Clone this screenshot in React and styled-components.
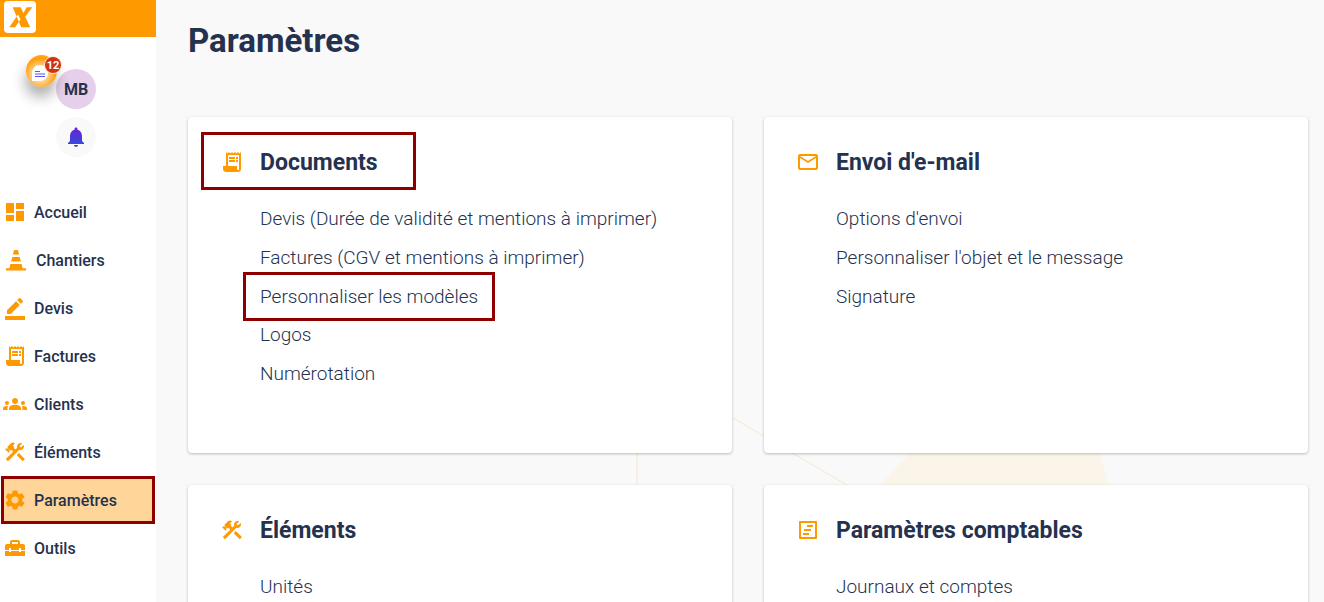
import React from 'react'
import styled, { createGlobalStyle } from 'styled-components'
import {
  MdDashboard,
  MdBorderColor,
  MdReceiptLong,
  MdGroups,
  MdConstruction,
  MdSettings,
  MdHomeRepairService,
  MdMailOutline,
} from 'react-icons/md'

const GlobalStyle = createGlobalStyle`
  html, body {
    margin: 0;
    height: 100%;
    overflow: hidden;
    background: #f9f9f9;
    font-family: Roboto, "Liberation Sans", sans-serif;
    color: #25324f;
  }
`

const Layout = styled.div`
  display: flex;
  height: 602px;
  overflow: hidden;
`

const Sidebar = styled.aside`
  width: 156px;
  flex: none;
  background: #fff;
`

const LogoBar = styled.div`
  height: 37px;
  background: #ff9900;
  padding: 1px 0 0 4px;
  box-sizing: border-box;
`

const Logo = styled.div`
  width: 32px;
  height: 32px;
  background: #fff;
  border-radius: 4px;
  display: flex;
`

const Profile = styled.div`
  display: flex;
  flex-direction: column;
  align-items: center;
  gap: 8px;
  padding: 32px 4px 0 0;
  height: 151px;
  box-sizing: border-box;
`

const Avatar = styled.div`
  position: relative;
  width: 40px;
  height: 40px;
  border-radius: 50%;
  background: #e6cfea;
  display: flex;
  align-items: center;
  justify-content: center;
  font-size: 16px;
  font-weight: 700;
`

const ChatBubble = styled.div`
  position: absolute;
  left: -30px;
  top: -14px;
  width: 31px;
  height: 32px;
  border-radius: 50%;
  background: radial-gradient(circle at 45% 60%, #ffd28a 0 30%, #ff9d0a 62%, #ffc46b 100%);
  box-shadow: -1px 10px 14px rgba(0, 0, 0, 0.32);
  display: flex;
  align-items: flex-end;
  padding: 0 0 6px 6px;
  box-sizing: border-box;
`

const Badge = styled.span`
  position: absolute;
  left: 19px;
  top: 2px;
  width: 16px;
  height: 16px;
  border-radius: 50%;
  background: #cf3217;
  box-shadow: 0 0 0 1px #ffe9c9;
  color: #fff;
  font-size: 11px;
  font-weight: 700;
  display: flex;
  align-items: center;
  justify-content: center;
`

const BellButton = styled.div`
  width: 40px;
  height: 40px;
  border-radius: 50%;
  background: #f9f9fa;
  display: flex;
  align-items: center;
  justify-content: center;
`

const Nav = styled.nav`
  display: flex;
  flex-direction: column;
`

const NavItem = styled.a`
  height: 48px;
  margin: 0 1px;
  padding-left: ${p => p.$pad || 2}px;
  box-sizing: border-box;
  display: flex;
  align-items: center;
  gap: ${p => p.$gap || 7}px;
  font-size: 16px;
  font-weight: 500;
  color: #25324f;
  background: ${p => (p.$active ? '#ffd59a' : 'transparent')};
  outline: ${p => (p.$active ? '3px solid #8e0000' : 'none')};
  outline-offset: -3px;
  svg {
    width: 24px;
    height: 24px;
    flex: none;
    color: #ff9900;
    fill: currentColor;
  }
`

const Main = styled.main`
  position: relative;
  flex: 1;
  padding: 0 16px 0 32px;
  box-sizing: border-box;
`

const Backdrop = styled.svg`
  position: absolute;
  left: 0;
  top: 0;
  width: 100%;
  height: 100%;
`

const PageTitle = styled.h1`
  position: relative;
  margin: 0;
  height: 117px;
  padding-top: 22px;
  box-sizing: border-box;
  font-size: 33px;
  line-height: 38px;
  font-weight: 700;
`

const CardGrid = styled.div`
  position: relative;
  display: grid;
  grid-template-columns: 1fr 1fr;
  grid-auto-rows: 336px;
  gap: 32px;
`

const Card = styled.section`
  background: #fff;
  border-radius: 4px;
  box-shadow: 0 1px 3px rgba(0, 0, 0, 0.25);
  padding: 25px 0 0 32px;
`

const CardHeading = styled.h2`
  position: relative;
  margin: 0 0 17.2px;
  height: 40px;
  display: flex;
  align-items: center;
  gap: 16px;
  font-size: 23px;
  font-weight: 700;
  svg {
    width: 24px;
    height: 24px;
    flex: none;
    color: #ff9900;
    fill: currentColor;
  }
  ${p =>
    p.$marked &&
    `&::after {
      content: '';
      position: absolute;
      left: -19px;
      top: -10px;
      width: 209px;
      height: 52px;
      border: 3px solid #8e0000;
    }`}
`

const LinkList = styled.ul`
  list-style: none;
  margin: 0;
  padding: 0 0 0 40px;
`

const LinkRow = styled.li`
  position: relative;
  height: 38.8px;
  display: flex;
  align-items: center;
  font-size: 19px;
  font-weight: 300;
  color: #25324f;
  ${p =>
    p.$marked &&
    `&::after {
      content: '';
      position: absolute;
      left: -17px;
      top: -5px;
      width: 246px;
      height: 43px;
      border: 3px solid #8e0000;
    }`}
`

const ConeIcon = () => (
  <svg viewBox="0 0 24 24">
    <path d="M10 2h4l1.100 4.500H8.900zM8.300 9h7.400l1.200 4.500H7.100zM6.500 16h11l1.200 4.200H22V22.500H2V20.200h3.300z" />
  </svg>
)

const LedgerIcon = () => (
  <svg viewBox="0 0 24 24">
    <path d="M4 3h16c.6 0 1 .4 1 1v16c0 .6-.4 1-1 1H4c-.6 0-1-.4-1-1V4c0-.6.4-1 1-1zm1 2v14h14V5zm6 2h6v2h-6zM8 11h7v2H8zm-1 4h6v2H7z" />
  </svg>
)

const BellIcon = () => (
  <svg width="24" height="24" viewBox="0 0 24 24">
    <defs>
      <linearGradient id="bellFill" x1="0" y1="0" x2="0" y2="1">
        <stop offset="0" stopColor="#6a22d0" />
        <stop offset="1" stopColor="#2f4fe0" />
      </linearGradient>
    </defs>
    <path
      fill="url(#bellFill)"
      d="M12 22c1.100 0 2-.9 2-2h-4c0 1.100.9 2 2 2zm6-6v-5c0-3.070-1.630-5.640-4.500-6.320V4c0-.83-.67-1.500-1.500-1.500s-1.500.67-1.500 1.500v.68C7.640 5.360 6 7.920 6 11v5l-2 2v1h16v-1l-2-2z"
    />
  </svg>
)

const menu = [
  { label: 'Accueil', icon: <MdDashboard /> },
  { label: 'Chantiers', icon: <ConeIcon />, pad: 3, gap: 8 },
  { label: 'Devis', icon: <MdBorderColor /> },
  { label: 'Factures', icon: <MdReceiptLong /> },
  { label: 'Clients', icon: <MdGroups /> },
  { label: 'Éléments', icon: <MdConstruction /> },
  { label: 'Paramètres', icon: <MdSettings />, active: true },
  { label: 'Outils', icon: <MdHomeRepairService /> },
]

const cards = [
  {
    title: 'Documents',
    icon: <MdReceiptLong />,
    marked: true,
    links: [
      { label: 'Devis (Durée de validité et mentions à imprimer)' },
      { label: 'Factures (CGV et mentions à imprimer)' },
      { label: 'Personnaliser les modèles', marked: true },
      { label: 'Logos' },
      { label: 'Numérotation' },
    ],
  },
  {
    title: "Envoi d'e-mail",
    icon: <MdMailOutline />,
    links: [
      { label: "Options d'envoi" },
      { label: "Personnaliser l'objet et le message" },
      { label: 'Signature' },
    ],
  },
  {
    title: 'Éléments',
    icon: <MdConstruction />,
    links: [{ label: 'Unités' }],
  },
  {
    title: 'Paramètres comptables',
    icon: <LedgerIcon />,
    links: [{ label: 'Journaux et comptes' }],
  },
]

const App = () => {
  return (
    <Layout>
      <GlobalStyle />
      <Sidebar>
        <LogoBar>
          <Logo>
            <svg width="32" height="32" viewBox="0 0 32 32">
              <path fill="#ff9900" d="M8.700 6.300h8l9.500 20h-9zM22.700 6.300h5.600L21 16l-1.500-4zM5.300 26.300H11l5.500-7.800-2.500-5z" />
            </svg>
          </Logo>
        </LogoBar>
        <Profile>
          <Avatar>
            MB
            <ChatBubble>
              <svg width="16" height="16" viewBox="0 0 16 16">
                <path fill="#fff" d="M8 0a8 8 0 1 1 0 16H0V8a8 8 0 0 1 8-8z" />
                <path fill="#5b57e8" d="M3 6h5v1H3zM3 8.500h10v1H3zM3 11h10v1H3z" />
              </svg>
              <Badge>12</Badge>
            </ChatBubble>
          </Avatar>
          <BellButton>
            <BellIcon />
          </BellButton>
        </Profile>
        <Nav>
          {menu.map(item => (
            <NavItem key={item.label} $active={item.active} $gap={item.gap} $pad={item.pad}>
              {item.icon}
              {item.label}
            </NavItem>
          ))}
        </Nav>
      </Sidebar>
      <Main>
        <Backdrop viewBox="0 0 1168 602" aria-hidden="true">
          <path fill="#fbf4e9" d="M724 485 754 453H944L952 485V602H724z" />
          <path stroke="#f8e6cc" fill="none" d="M577 418 691 485M481 453V485" />
        </Backdrop>
        <PageTitle>Paramètres</PageTitle>
        <CardGrid>
          {cards.map(card => (
            <Card key={card.title}>
              <CardHeading $marked={card.marked}>
                {card.icon}
                {card.title}
              </CardHeading>
              <LinkList>
                {card.links.map(link => (
                  <LinkRow key={link.label} $marked={link.marked}>
                    {link.label}
                  </LinkRow>
                ))}
              </LinkList>
            </Card>
          ))}
        </CardGrid>
      </Main>
    </Layout>
  )
}

export default App
